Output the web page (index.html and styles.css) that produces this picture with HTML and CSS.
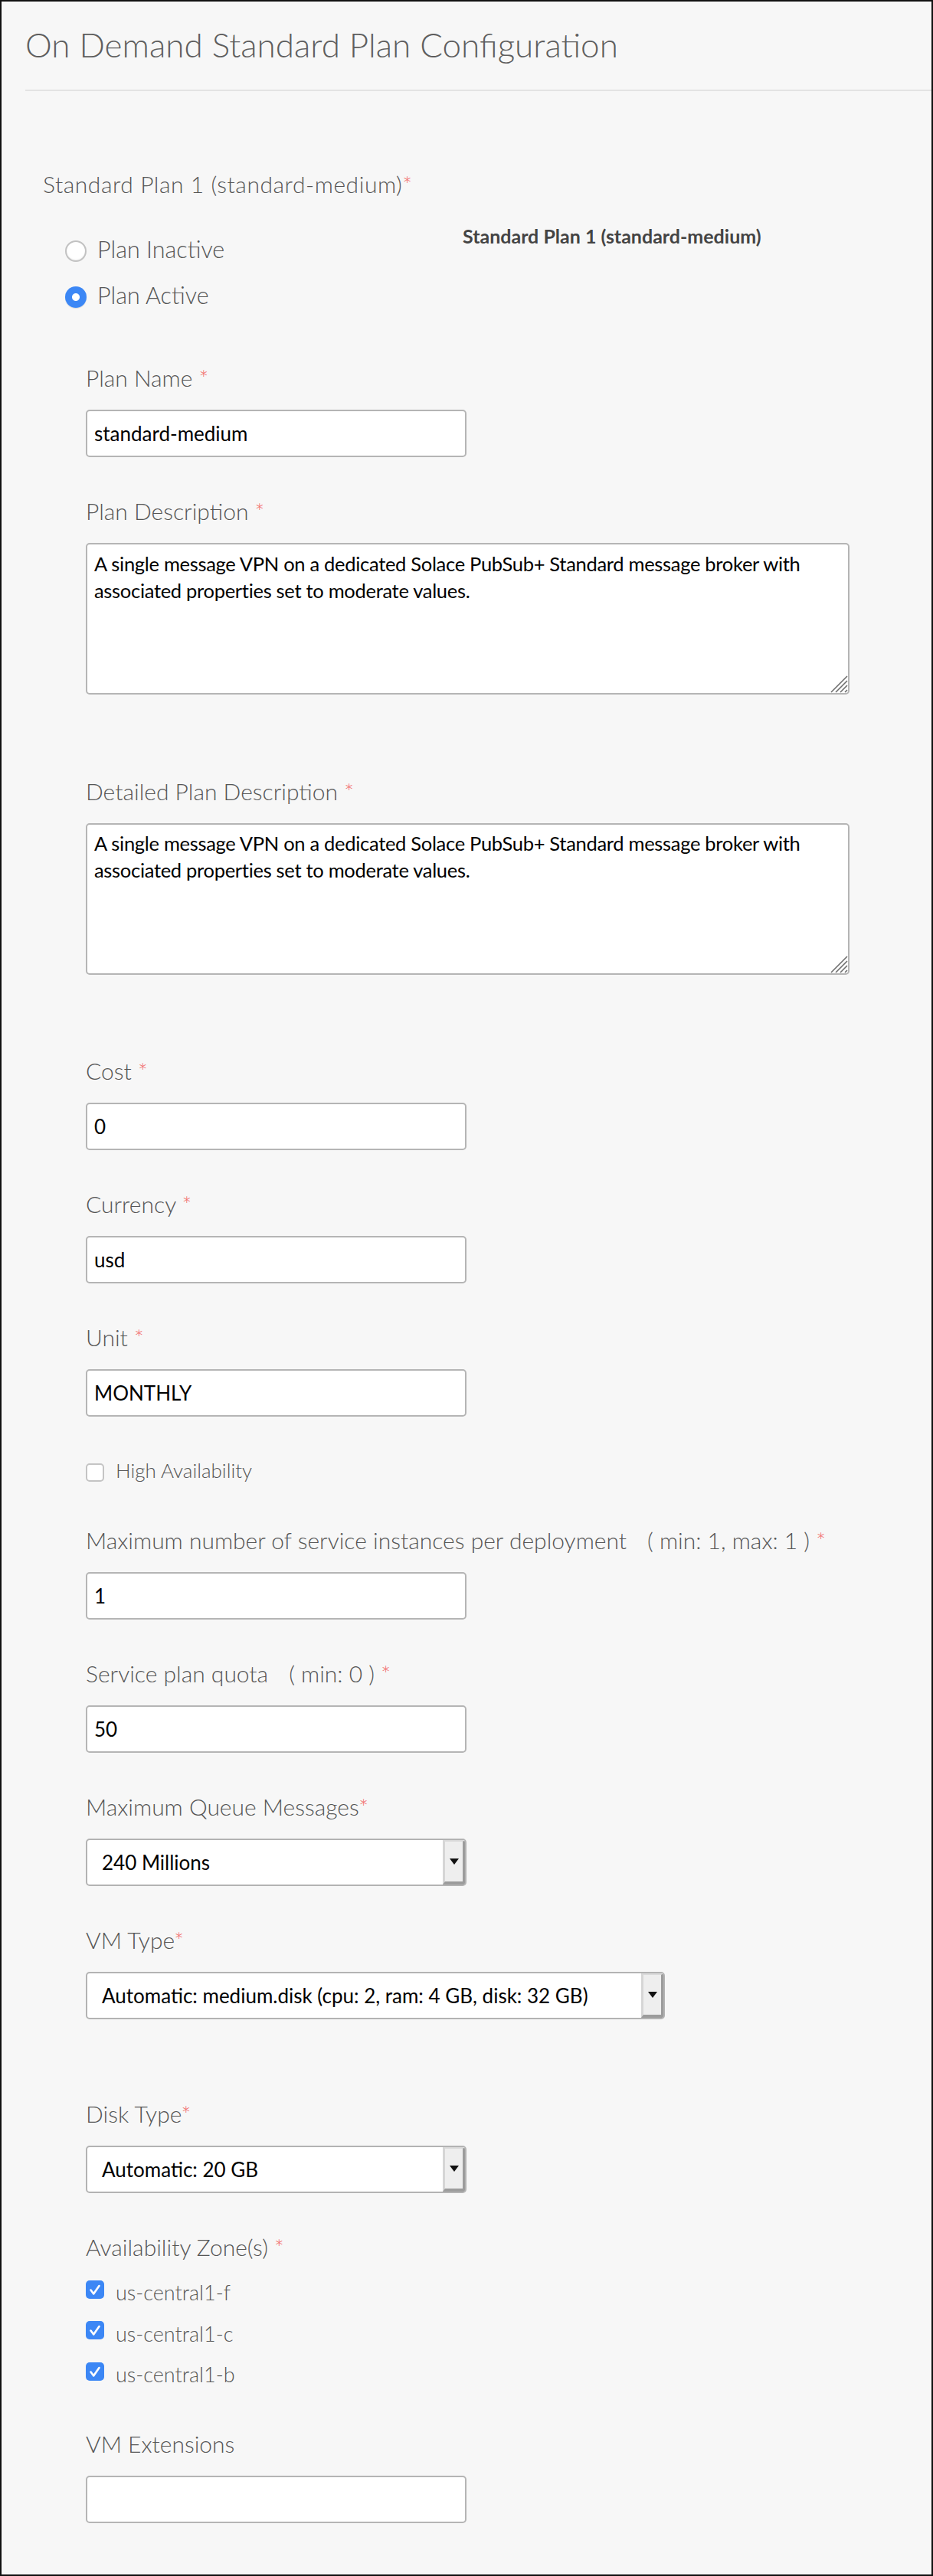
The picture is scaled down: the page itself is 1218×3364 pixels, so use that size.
FILE: index.html
```html
<!DOCTYPE html>
<html lang="en">
<head>
<meta charset="utf-8">
<title>On Demand Standard Plan Configuration</title>
<link rel="stylesheet" href="styles.css">
</head>
<body>
<div class="page">
  <header class="header">
    <h1 class="title">On Demand Standard Plan Configuration</h1>
  </header>
  <main class="content">
    <div class="section-label">Standard Plan 1 (standard-medium)<span class="req">*</span></div>

    <div class="plan-row">
      <div class="radios">
        <div class="radio-row"><span class="radio"></span><span class="radio-text">Plan Inactive</span></div>
        <div class="radio-row"><span class="radio radio--on"></span><span class="radio-text">Plan Active</span></div>
      </div>
      <div class="plan-title">Standard Plan 1 (standard-medium)</div>
    </div>

    <div class="fields">
      <div class="field">
        <label class="label">Plan Name <span class="req">*</span></label>
        <input class="input" type="text" value="standard-medium">
      </div>

      <div class="field field--tall">
        <label class="label">Plan Description <span class="req">*</span></label>
        <div class="ta-wrap">
          <textarea class="textarea">A single message VPN on a dedicated Solace PubSub+ Standard message broker with associated properties set to moderate values.</textarea>
          <svg class="grip" width="28" height="28" viewBox="0 0 28 28"><path d="M27 6 L6 27 M27 12 L12 27 M27 18 L18 27 M27 24 L24 27" stroke="#6e6e6e" stroke-width="1.6" fill="none"/></svg>
        </div>
      </div>

      <div class="field field--tall">
        <label class="label">Detailed Plan Description <span class="req">*</span></label>
        <div class="ta-wrap">
          <textarea class="textarea">A single message VPN on a dedicated Solace PubSub+ Standard message broker with associated properties set to moderate values.</textarea>
          <svg class="grip" width="28" height="28" viewBox="0 0 28 28"><path d="M27 6 L6 27 M27 12 L12 27 M27 18 L18 27 M27 24 L24 27" stroke="#6e6e6e" stroke-width="1.6" fill="none"/></svg>
        </div>
      </div>

      <div class="field">
        <label class="label">Cost <span class="req">*</span></label>
        <input class="input" type="text" value="0">
      </div>

      <div class="field">
        <label class="label">Currency <span class="req">*</span></label>
        <input class="input" type="text" value="usd">
      </div>

      <div class="field">
        <label class="label">Unit <span class="req">*</span></label>
        <input class="input" type="text" value="MONTHLY">
      </div>

      <div class="check-row check-row--ha">
        <span class="box"></span>
        <span class="check-text">High Availability</span>
      </div>

      <div class="field">
        <label class="label">Maximum number of service instances per deployment<span class="range">( min: 1, max: 1 )</span> <span class="req">*</span></label>
        <input class="input" type="text" value="1">
      </div>

      <div class="field">
        <label class="label">Service plan quota<span class="range">( min: 0 )</span> <span class="req">*</span></label>
        <input class="input" type="text" value="50">
      </div>

      <div class="field">
        <label class="label">Maximum Queue Messages<span class="req">*</span></label>
        <div class="select">
          <span class="select-value">240 Millions</span>
          <span class="select-btn"><span class="arrow"></span></span>
        </div>
      </div>

      <div class="field field--vm">
        <label class="label">VM Type<span class="req">*</span></label>
        <div class="select select--wide">
          <span class="select-value">Automatic: medium.disk (cpu: 2, ram: 4 GB, disk: 32 GB)</span>
          <span class="select-btn"><span class="arrow"></span></span>
        </div>
      </div>

      <div class="field">
        <label class="label">Disk Type<span class="req">*</span></label>
        <div class="select">
          <span class="select-value">Automatic: 20 GB</span>
          <span class="select-btn"><span class="arrow"></span></span>
        </div>
      </div>

      <div class="field field--zones">
        <label class="label">Availability Zone(s) <span class="req">*</span></label>
        <div class="zones">
          <div class="check-row"><span class="box box--on"><svg width="24" height="24" viewBox="0 0 24 24"><path d="M6.5 12.5 L10.2 17.5 L17.5 7" stroke="#fff" stroke-width="2.6" fill="none" stroke-linecap="round" stroke-linejoin="round"/></svg></span><span class="check-text check-text--zone">us-central1-f</span></div>
          <div class="check-row"><span class="box box--on"><svg width="24" height="24" viewBox="0 0 24 24"><path d="M6.5 12.5 L10.2 17.5 L17.5 7" stroke="#fff" stroke-width="2.6" fill="none" stroke-linecap="round" stroke-linejoin="round"/></svg></span><span class="check-text check-text--zone">us-central1-c</span></div>
          <div class="check-row"><span class="box box--on"><svg width="24" height="24" viewBox="0 0 24 24"><path d="M6.5 12.5 L10.2 17.5 L17.5 7" stroke="#fff" stroke-width="2.6" fill="none" stroke-linecap="round" stroke-linejoin="round"/></svg></span><span class="check-text check-text--zone">us-central1-b</span></div>
        </div>
      </div>

      <div class="field">
        <label class="label">VM Extensions</label>
        <input class="input" type="text" value="">
      </div>
    </div>
  </main>
</div>
</body>
</html>
```
FILE: styles.css
```css
* { box-sizing: border-box; }

html, body {
  margin: 0;
  padding: 0;
  background: #f7f7f7;
}

body {
  font-family: Lato, "Liberation Sans", sans-serif;
  color: #555;
}

.page {
  min-height: 100vh;
  border: 2px solid #111;
  background: #f7f7f7;
}

.header {
  margin-left: 31px;
  padding: 28.6px 0 32.4px;
  border-bottom: 2px solid #e3e3e3;
}

.title {
  margin: 0;
  font-size: 44px;
  line-height: 54px;
  font-weight: 300;
  color: #5e5e5e;
}

.content {
  padding: 103.4px 0 0 54px;
}

.section-label {
  font-size: 30px;
  line-height: 36px;
  font-weight: 300;
  letter-spacing: 0.55px;
  color: #555;
}

.req {
  color: #f26a6a;
}

.plan-row {
  display: flex;
  align-items: flex-start;
  margin-top: 35px;
}

.radios {
  flex: 0 0 519px;
  margin-left: 29px;
  padding-top: 11.8px;
  display: flex;
  flex-direction: column;
  gap: 20px;
}

.radio-row {
  display: flex;
  align-items: flex-start;
  height: 40px;
}

.radio {
  flex: 0 0 28px;
  width: 28px;
  height: 28px;
  margin-top: 8.8px;
  border-radius: 50%;
  background: #fff;
  border: 2px solid #c2c2c2;
  box-shadow: inset 0 -1px 2px rgba(0,0,0,0.06);
}

.radio--on {
  border: none;
  background: radial-gradient(circle, #fff 0 4.5px, #3c87f5 5.5px);
  box-shadow: 0 1px 1px rgba(0,0,0,0.12);
}

.radio-text {
  margin-left: 14px;
  font-size: 30.5px;
  line-height: 40px;
  font-weight: 300;
  color: #555;
}

.plan-title {
  font-size: 25px;
  line-height: 30px;
  font-weight: 700;
  color: #444;
}

.fields {
  margin-left: 56px;
  margin-top: 70.3px;
}

.field {
  margin-bottom: 52px;
}

.field--tall {
  margin-bottom: 107.5px;
}

.field--vm {
  margin-bottom: 105px;
}

.field--zones {
  margin-bottom: 54px;
}

.label {
  display: block;
  font-size: 30px;
  line-height: 36px;
  font-weight: 300;
  margin-bottom: 24px;
  color: #555;
}

.range {
  margin-left: 27px;
}

.input {
  display: block;
  width: 497px;
  height: 62px;
  margin: 0;
  padding: 0 9px;
  border: 2px solid #b5b5b5;
  border-radius: 5px;
  background: #fff;
  font-family: Lato, "Liberation Sans", sans-serif;
  font-size: 26px;
  color: #000;
  outline: none;
}

.ta-wrap {
  position: relative;
  width: 997px;
}

.textarea {
  display: block;
  width: 997px;
  height: 198px;
  margin: 0;
  padding: 7.4px 9px;
  border: 2px solid #b5b5b5;
  border-radius: 5px;
  background: #fff;
  font-family: Lato, "Liberation Sans", sans-serif;
  font-size: 25.5px;
  letter-spacing: -0.3px;
  line-height: 35px;
  color: #000;
  resize: none;
  outline: none;
  overflow: hidden;
}

.grip {
  position: absolute;
  right: 2px;
  bottom: 2px;
}

.check-row {
  display: flex;
  align-items: flex-start;
  height: 36px;
}

.check-row--ha {
  margin-bottom: 55px;
}

.check-row--ha .box {
  margin-top: 8.5px;
}

.box {
  flex: 0 0 24px;
  width: 24px;
  height: 24px;
  margin-top: 1.5px;
  border-radius: 5px;
  background: #fff;
  border: 2px solid #c4c4c4;
}

.box--on {
  border: none;
  background: #3c87f5;
}

.box svg {
  display: block;
}

.check-text {
  margin-left: 15px;
  font-size: 26px;
  line-height: 36px;
  font-weight: 300;
  color: #555;
}

.check-text--zone {
  font-size: 27px;
}

.zones {
  display: flex;
  flex-direction: column;
  gap: 17.5px;
}

.select {
  display: flex;
  width: 497px;
  height: 62px;
  border: 2px solid #b3b3b3;
  border-radius: 5px;
  background: #fff;
  overflow: hidden;
}

.select--wide {
  width: 756px;
}

.select-value {
  flex: 1;
  padding-left: 19px;
  font-size: 26px;
  line-height: 58px;
  color: #000;
  white-space: nowrap;
}

.select-btn {
  flex: 0 0 29px;
  display: flex;
  align-items: center;
  justify-content: center;
  background: #eeeeee;
  border-top: 2px solid #dadada;
  border-left: 3px solid #d6d6d6;
  border-right: 3px solid #9c9c9c;
  border-bottom: 4px solid #9c9c9c;
}

.arrow {
  width: 0;
  height: 0;
  border-left: 6px solid transparent;
  border-right: 6px solid transparent;
  border-top: 8px solid #111;
}
```
